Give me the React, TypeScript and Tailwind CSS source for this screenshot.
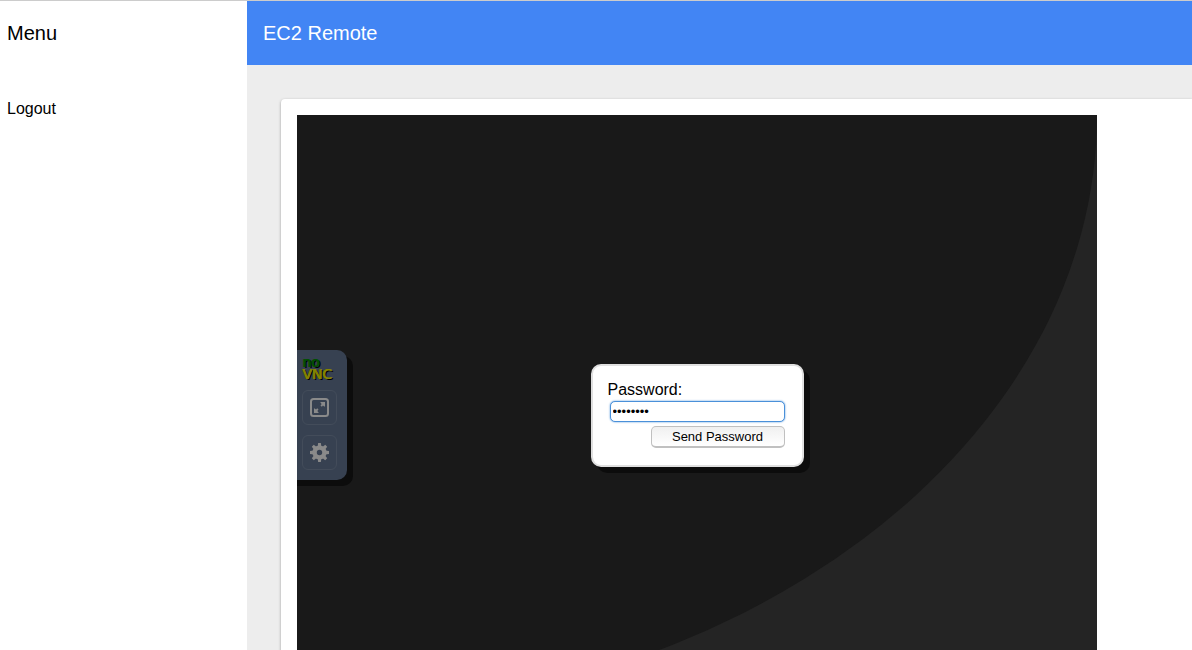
import { useState } from 'react';

const GEAR_ANGLES = [0, 45, 90, 135, 180, 225, 270, 315];

function FullscreenIcon() {
  return (
    <svg viewBox="0 0 25 25" className="size-[25px]" aria-hidden="true">
      <rect x="4" y="4" width="17" height="17" rx="2.5" fill="none" stroke="#8a8a8a" strokeWidth="2" />
      <path d="M18 7v4.500h-.8l-1.200-1-1.200 1.200-1.300-1.300L14.700 9 13.500 7.800V7z" fill="#8a8a8a" />
      <path d="M7 18v-4.500h.8l1.200 1 1.200-1.200 1.300 1.300L10.300 16l1.200 1.200v.8z" fill="#8a8a8a" />
    </svg>
  );
}

function SettingsIcon() {
  return (
    <svg viewBox="0 0 25 25" className="size-[25px]" aria-hidden="true">
      {GEAR_ANGLES.map((angle) => (
        <path
          key={angle}
          d="M10.600 7L11.100 3h2.800l.5 4z"
          fill="#8a8a8a"
          transform={`rotate(${angle} 12.5 12.5)`}
        />
      ))}
      <circle cx="12.500" cy="12.500" r="4.900" fill="none" stroke="#8a8a8a" strokeWidth="4.400" />
    </svg>
  );
}

function ControlBar() {
  return (
    <div className="absolute inset-y-0 left-0 flex items-center">
      <div className="flex w-[50px] flex-col gap-2.5 rounded-r-[10px] bg-[#374151] pt-1.5 pr-2.5 pb-2.5 pl-[5px] shadow-[6px_6px_0_#0c0c0c,0_6px_0_#0c0c0c]">
        <div className="flex h-6 flex-col font-['DejaVu_Sans',sans-serif] text-sm leading-3">
          <span className="text-[#005000] [text-shadow:1px_0_0_#005000,2px_1px_0_#000]">no</span>
          <span className="text-[#858500] [text-shadow:1px_0_0_#858500,2px_1px_0_#000]">VNC</span>
        </div>
        <button
          type="button"
          aria-label="Fullscreen"
          className="flex size-[35px] items-center justify-center rounded-md border border-[#434c5a]"
        >
          <FullscreenIcon />
        </button>
        <button
          type="button"
          aria-label="Settings"
          className="flex size-[35px] items-center justify-center rounded-md border border-[#434c5a]"
        >
          <SettingsIcon />
        </button>
      </div>
    </div>
  );
}

function PasswordDialog() {
  const [password, setPassword] = useState('password');
  return (
    <form
      onSubmit={(event) => event.preventDefault()}
      className="flex w-[213px] flex-col rounded-[10px] border-2 border-[#e0e0e0] bg-white px-[15px] pt-3.5 pb-[17px] shadow-[6px_6px_0_rgba(0,0,0,0.5)]"
    >
      <label htmlFor="password" className="text-base leading-5 text-black">
        Password:
      </label>
      <input
        id="password"
        type="password"
        value={password}
        onChange={(event) => setPassword(event.target.value)}
        className="mx-0.5 mt-px h-[21px] rounded-[5px] border border-[#4a90d9] bg-white px-0.5 text-[13px] text-black shadow-[0_0_2px_#4a90d9] outline-none"
      />
      <button
        type="submit"
        className="mt-1 mr-0.5 h-[22px] w-[134px] self-end rounded-[5px] border border-b-2 border-[#c0c0c0] bg-linear-to-t from-white to-[#f0f0f0] text-[13px] leading-[19px] text-black"
      >
        Send Password
      </button>
    </form>
  );
}

export default function App() {
  return (
    <div className="flex h-screen overflow-hidden border-t border-[#cccccc] bg-white font-['Liberation_Sans',Arial,sans-serif] text-black">
      <aside className="w-[247px] shrink-0 px-[7px]">
        <h2 className="flex h-16 items-center text-xl">Menu</h2>
        <nav className="pt-8">
          <a href="#logout" className="text-base leading-6">
            Logout
          </a>
        </nav>
      </aside>
      <div className="flex min-w-0 flex-1 flex-col bg-[#ededed]">
        <header className="flex h-16 shrink-0 items-center bg-[#4285f4] px-4 text-white">
          <h1 className="text-xl">EC2 Remote</h1>
        </header>
        <main className="min-h-0 flex-1 overflow-hidden pt-[34px] pl-[34px]">
          <section className="rounded-tl bg-white p-4 shadow-[0_1px_3px_rgba(0,0,0,0.35)]">
            <div className="relative aspect-4/3 w-[800px] bg-[#242424]">
              <div className="flex size-full items-center justify-center rounded-br-[100%] bg-[#191919]">
                <PasswordDialog />
              </div>
              <ControlBar />
            </div>
          </section>
        </main>
      </div>
    </div>
  );
}
